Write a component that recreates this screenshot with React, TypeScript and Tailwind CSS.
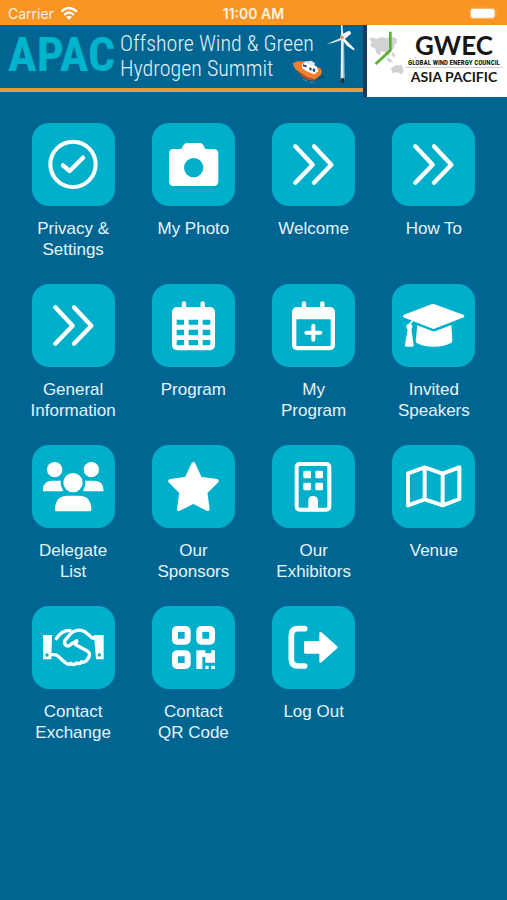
import React from "react";

interface MenuItem {
  label: string;
  icon: React.ReactNode;
}

const DoubleChevron = () => (
  <g fill="none" stroke="white" strokeWidth="13" strokeLinecap="round" strokeLinejoin="round">
    <path d="M70 70 122 125 70 179" />
    <path d="M126 70 178 125 126 179" />
  </g>
);

const CheckCircle = () => (
  <g fill="none" stroke="white">
    <circle cx="123" cy="124" r="68" strokeWidth="12" />
    <path d="M93 127 113 144 153 104" strokeWidth="13" strokeLinecap="round" strokeLinejoin="round" />
  </g>
);

const Camera = () => (
  <>
    <path
      fill="white"
      d="M65 78H88L94 67Q97 60 106 60H143Q151 60 154 67L160 78H185Q199 78 199 92V175Q199 189 185 189H65Q51 189 51 175V92Q51 78 65 78Z"
    />
    <circle cx="125" cy="134" r="29" fill="#00b0ca" />
  </>
);

const Calendar = () => (
  <>
    <rect x="60" y="69" width="129" height="130" rx="15" fill="white" />
    <path d="M96 58V80M152 58V80" stroke="white" strokeWidth="13" strokeLinecap="round" />
    <path
      fill="#00b0ca"
      d="M74 107h22v15h-22zM110 107h28v15h-28zM152 107h23v15h-23zM74 137h22v17h-22zM110 137h28v17h-28zM152 137h23v17h-23zM77 168h19v16h-22v-13zM110 168h28v16h-28zM152 168h23v13l-3 3h-20z"
    />
  </>
);

const CalendarPlus = () => (
  <>
    <rect x="60" y="69" width="129" height="130" rx="15" fill="white" />
    <rect x="73" y="106" width="103" height="80" rx="2" fill="#00b0ca" />
    <path d="M96 58V80M151 58V80" stroke="white" strokeWidth="13" strokeLinecap="round" />
    <path d="M124 125V167M103 146H145" stroke="white" strokeWidth="12" strokeLinecap="round" />
  </>
);

const GraduationCap = () => (
  <g fill="white">
    <path
      d="M125 62 213 94Q217 97 213 99L128 132Q125 134 121 132L37 99Q33 97 37 94L121 62Z"
      stroke="white"
      strokeWidth="4"
      strokeLinejoin="round"
    />
    <path d="M76 124 118 140Q125 143 133 140L178 123 181 170Q181 174 177 177Q158 188 125 188T74 177Q71 175 71 171Z" />
    <path d="M62 111Q53 116 52 128" fill="none" stroke="white" strokeWidth="6" />
    <circle cx="52" cy="128" r="9" />
    <path d="M47 135H58L65 183Q66 188 61 188H43Q38 188 39 183Z" />
  </g>
);

const People = () => (
  <g fill="white">
    <circle cx="68" cy="74" r="23" />
    <circle cx="178" cy="74" r="23" />
    <path d="M33 139V133Q34 107 61 107H93V139Z" />
    <path d="M214 139V133Q213 107 186 107H154V139Z" />
    <circle cx="123" cy="113" r="37" fill="#00b0ca" />
    <circle cx="123" cy="113" r="29" />
    <path d="M69 195Q69 152 106 152H141Q178 152 178 195Q178 199 174 199H73Q69 199 69 195Z" />
  </g>
);

const Star = () => (
  <path
    fill="white"
    stroke="white"
    strokeWidth="12"
    strokeLinejoin="round"
    d="M124 57 144 101 194 108 160 142 167 192 124 170 81 192 88 142 55 108 104 101Z"
  />
);

const Building = () => (
  <>
    <rect x="74" y="57" width="98" height="137" rx="9" fill="none" stroke="white" strokeWidth="12" />
    <g fill="white">
      <rect x="94" y="77" width="23" height="23" rx="4" />
      <rect x="130" y="77" width="23" height="23" rx="4" />
      <rect x="94" y="113" width="23" height="23" rx="4" />
      <rect x="130" y="113" width="23" height="23" rx="4" />
      <path d="M109 190V167Q109 153 123 153T138 167V190Z" />
    </g>
  </>
);

const FoldedMap = () => (
  <path
    fill="none"
    stroke="white"
    strokeWidth="12"
    strokeLinejoin="round"
    d="M48 85 98 67 152 86 202 67V162L152 181 98 163 48 181ZM98 67V163M152 86V181"
  />
);

const Handshake = () => (
  <>
    <path fill="white" d="M33 87H60L58 160H33ZM215 87H186L192 160H215Z" />
    <circle cx="45" cy="147" r="5" fill="#00b0ca" />
    <circle cx="202" cy="147" r="5" fill="#00b0ca" />
    <g fill="none" stroke="white" strokeWidth="10" strokeLinecap="round" strokeLinejoin="round">
      <path d="M73 98Q88 73 114 73" />
      <path d="M192 96H181L160 78Q149 71 135 73Q124 75 116 83L99 103Q95 113 102 118Q110 123 118 114L134 105" />
      <path d="M134 105 131 116 166 135Q176 142 171 153L165 162Q158 171 149 167Q144 176 134 171Q125 180 116 172Q108 178 100 170L80 152Q74 146 66 146H57" />
    </g>
  </>
);

const QrCode = () => (
  <>
    <g fill="none" stroke="white" strokeWidth="18">
      <rect x="69" y="69" width="38" height="38" rx="6" />
      <rect x="142" y="69" width="38" height="38" rx="6" />
      <rect x="69" y="142" width="38" height="38" rx="6" />
    </g>
    <path
      fill="white"
      d="M133 133H160V142H178V133H189V170H160V153H151V189H133ZM160 179H170V189H160ZM178 179H189V189H178Z"
    />
  </>
);

const SignOut = () => (
  <>
    <path
      fill="none"
      stroke="white"
      strokeWidth="17"
      strokeLinecap="round"
      d="M98 68H78Q58 68 58 88V160Q58 180 78 180H98"
    />
    <path
      fill="white"
      stroke="white"
      strokeWidth="8"
      strokeLinejoin="round"
      d="M100 109H146V82L193 124 146 166V139H100Z"
    />
  </>
);

const menuItems: MenuItem[] = [
  { label: "Privacy & Settings", icon: <CheckCircle /> },
  { label: "My Photo", icon: <Camera /> },
  { label: "Welcome", icon: <DoubleChevron /> },
  { label: "How To", icon: <DoubleChevron /> },
  { label: "General Information", icon: <DoubleChevron /> },
  { label: "Program", icon: <Calendar /> },
  { label: "My Program", icon: <CalendarPlus /> },
  { label: "Invited Speakers", icon: <GraduationCap /> },
  { label: "Delegate List", icon: <People /> },
  { label: "Our Sponsors", icon: <Star /> },
  { label: "Our Exhibitors", icon: <Building /> },
  { label: "Venue", icon: <FoldedMap /> },
  { label: "Contact Exchange", icon: <Handshake /> },
  { label: "Contact QR Code", icon: <QrCode /> },
  { label: "Log Out", icon: <SignOut /> },
];

const StatusBar = () => (
  <div className="grid h-[25px] grid-cols-3 items-center bg-[#f99522] px-2 pt-[2px] font-['Inter',sans-serif] text-sm text-[#fff3e0]">
    <div className="flex items-center gap-[6px]">
      <span>Carrier</span>
      <svg viewBox="0 0 54 40" className="h-[13px] w-[18px]" fill="none" stroke="white" strokeWidth="7">
        <path d="M3 14Q27 -8 51 14" />
        <path d="M12 24Q27 10 42 24" />
        <path d="M27 39 18 31Q27 23 36 31Z" fill="white" stroke="none" />
      </svg>
    </div>
    <span className="text-center font-semibold">11:00 AM</span>
    <svg viewBox="0 0 90 39" className="h-[13px] w-[30px] justify-self-end">
      <rect x="2" y="2" width="78" height="34" rx="11" fill="#fbb765" />
      <rect x="6" y="6" width="70" height="26" rx="7" fill="white" />
      <path d="M83 13Q89 19 83 25Z" fill="#fbb765" />
    </svg>
  </div>
);

const BoatAndTurbine = () => (
  <svg viewBox="0 0 216 186" className="h-[62px] w-[72px] shrink-0">
    {/* boat */}
    <path d="M28 150 60 168 104 160 92 140Z" fill="#07567e" />
    <path d="M6 114Q16 108 38 109L88 130Q95 136 91 148L76 161Q60 164 44 154L15 134Q7 126 6 114Z" fill="#f08030" />
    <path d="M15 134 44 154Q60 164 76 161L70 167Q52 168 34 156Z" fill="#b94a22" />
    <path d="M32 120 44 109 76 124 82 138 70 148 50 140 34 130Z" fill="white" />
    <path d="M56 127 62 129 61 137 55 134ZM66 130 73 133 72 141 65 139Z" fill="#203b66" />
    <path d="M36 118 48 122 47 127 35 124Z" fill="#203b66" />
    <path d="M42 110 60 107 72 114 70 122 56 120Z" fill="#dce8f0" />
    <path d="M36 163 48 168M56 171 68 174" stroke="#4b93b5" strokeWidth="3" />
    {/* wind turbine */}
    <path d="M150 42H159L160 164H149Z" fill="#e4edf3" />
    <path d="M156 42H159L160 164H156Z" fill="#a9bfcc" />
    <path d="M149 160H160V172Q154 176 149 172Z" fill="#2b2c35" />
    <path d="M150 0H154L157 35H151Z" fill="white" />
    <path d="M150 38 107 57 128 53 154 44Z" fill="#cfe0ea" />
    <path d="M158 38 191 72 188 76 168 62 153 43Z" fill="white" />
    <path d="M150 29 172 18Q180 17 180 26L158 45Q150 46 148 38Z" fill="#f3f7fa" />
    <circle cx="153" cy="37" r="5" fill="#ef8b3c" />
  </svg>
);

const GwecLogo = () => (
  <div className="flex h-[72px] w-[144px] shrink-0 items-start border-l-4 border-[#173c60] bg-white pt-[6px] pr-1 text-[#161616]">
    <svg viewBox="0 0 114 138" className="h-[46px] w-[38px] shrink-0">
      <g fill="#d2d2d2">
        <path d="M5 22 18 20 30 24 42 18 60 22 68 16 88 22 90 34 82 42 80 52 70 62 64 76 54 64 42 60 38 74 28 66 24 52 10 46 14 34Z" />
        <path d="M56 78 68 82 78 92 66 94ZM76 62 86 72 82 80 74 74Z" />
        <path d="M72 112 82 104 92 102 98 104 102 100 108 112 110 122 102 130 92 124 76 126Z" />
      </g>
      <path d="M70 2V58L26 99" fill="none" stroke="#5aae32" strokeWidth="8" />
    </svg>
    <div className="flex flex-1 flex-col items-center font-['Lato',sans-serif] font-bold whitespace-nowrap">
      <span className="text-[26px] leading-[28px]">GWEC</span>
      <span className="font-['Roboto_Condensed','Liberation_Sans_Narrow',sans-serif] text-[7px] leading-[8px]">
        GLOBAL WIND ENERGY COUNCIL
      </span>
      <hr className="w-full border-[#cfcfcf]" />
      <span className="text-sm leading-[18px]">ASIA PACIFIC</span>
    </div>
  </div>
);

const Banner = () => (
  <header className="flex items-start font-['Roboto_Condensed','Liberation_Sans_Narrow',sans-serif]">
    <div className="flex h-[67px] flex-1 items-start border-b-4 border-[#e79a3c] pl-2">
      <span className="w-[112px] text-5xl leading-[60px] font-bold text-[#00b4cc]">APAC</span>
      <h1 className="flex-1 pt-[6px] text-[22px] leading-[25px] font-light whitespace-nowrap text-[#e2f1f9]">
        Offshore Wind &amp; Green
        <br />
        Hydrogen Summit
      </h1>
      <div className="-ml-8">
        <BoatAndTurbine />
      </div>
    </div>
    <GwecLogo />
  </header>
);

const MenuButton: React.FC<MenuItem> = ({ label, icon }) => (
  <button type="button" className="flex min-h-[137px] flex-col items-center gap-3">
    <span className="size-[83px] rounded-[17px] bg-[#00b0ca]">
      <svg viewBox="0 0 249 249" className="size-full" aria-hidden="true">
        {icon}
      </svg>
    </span>
    <span className="w-[88px] text-[17px] leading-[21px]">{label}</span>
  </button>
);

export default function App() {
  return (
    <div className="min-h-screen bg-[#006591] font-['Liberation_Sans',sans-serif]">
      <StatusBar />
      <Banner />
      <main className="grid grid-cols-4 gap-y-6 px-[13px] pt-[26px] pb-8 text-[#e6f4fb]">
        {menuItems.map((item) => (
          <MenuButton key={item.label} {...item} />
        ))}
      </main>
    </div>
  );
}
